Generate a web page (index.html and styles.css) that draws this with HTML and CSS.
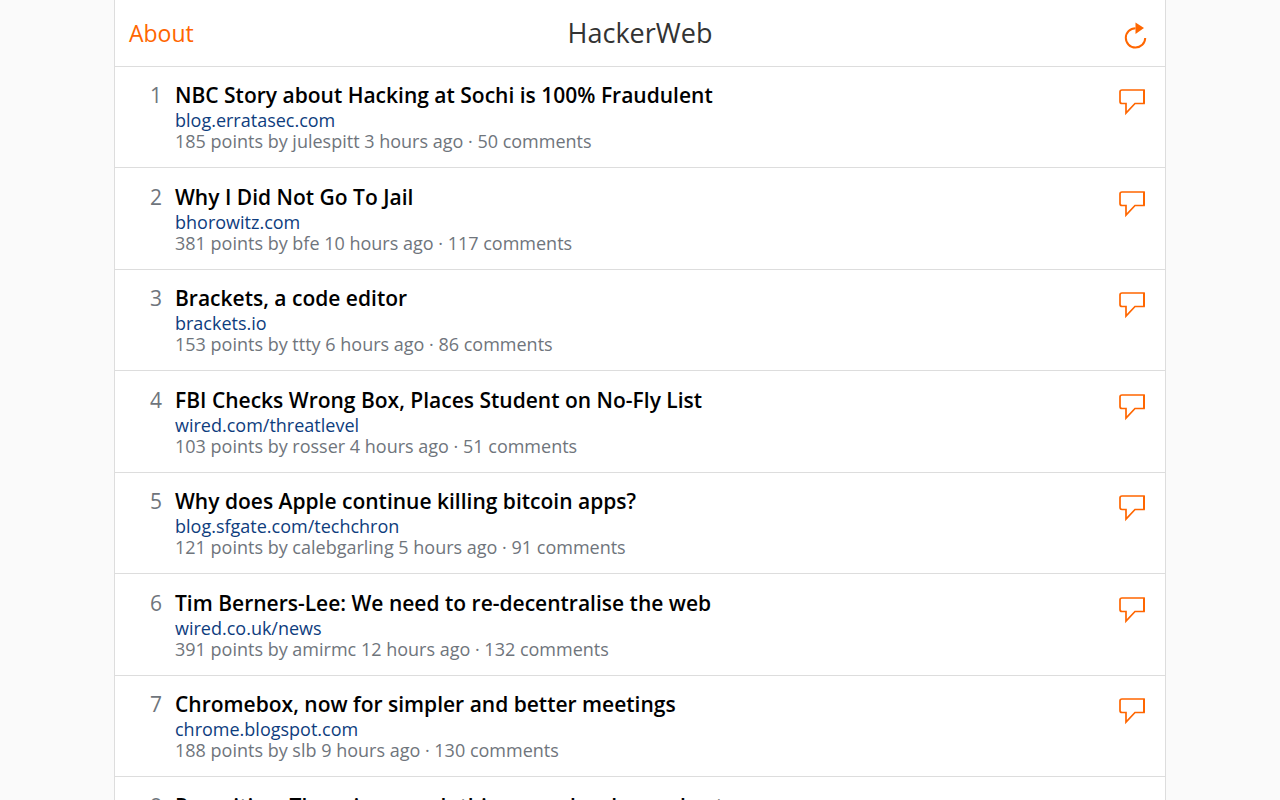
FILE: index.html
```html
<!DOCTYPE html>
<html lang="en">
<head>
<meta charset="utf-8">
<meta name="viewport" content="width=device-width, initial-scale=1">
<title>HackerWeb</title>
<link rel="stylesheet" href="styles.css">
</head>
<body>
<svg class="sprite" aria-hidden="true">
<symbol id="comment" viewBox="0 0 28 28"><path d="M4 2H26V15.500H17L8 25V15.500H4Q2 15.500 2 13.500V4Q2 2 4 2Z" fill="none" stroke="currentColor" stroke-width="1.700"/><path d="M26 2V15.500" stroke="currentColor" stroke-width="2"/></symbol>
</svg>
<div class="page">
<header class="bar">
<a class="about" href="#about">About</a>
<h1 class="brand">HackerWeb</h1>
<button class="refresh" type="button" aria-label="Refresh"><svg class="icon" viewBox="0 0 28 28"><path d="M12.500 7.200A9.700 9.700 0 1 0 22.200 17" fill="none" stroke="currentColor" stroke-width="2"/><path d="M12.500 1.500V13L21 7Z" fill="currentColor"/></svg></button>
</header>
<ol class="stories">
<li class="story"><span class="rank">1</span><div class="body"><a class="title" href="#1">NBC Story about Hacking at Sochi is 100% Fraudulent</a><span class="site">blog.erratasec.com</span><span class="meta">185 points by julespitt 3 hours ago · 50 comments</span></div><a class="comments" href="#c1" aria-label="Comments"><svg class="icon"><use href="#comment"/></svg></a></li>
<li class="story"><span class="rank">2</span><div class="body"><a class="title" href="#2">Why I Did Not Go To Jail</a><span class="site">bhorowitz.com</span><span class="meta">381 points by bfe 10 hours ago · 117 comments</span></div><a class="comments" href="#c2" aria-label="Comments"><svg class="icon"><use href="#comment"/></svg></a></li>
<li class="story"><span class="rank">3</span><div class="body"><a class="title" href="#3">Brackets, a code editor</a><span class="site">brackets.io</span><span class="meta">153 points by ttty 6 hours ago · 86 comments</span></div><a class="comments" href="#c3" aria-label="Comments"><svg class="icon"><use href="#comment"/></svg></a></li>
<li class="story"><span class="rank">4</span><div class="body"><a class="title" href="#4">FBI Checks Wrong Box, Places Student on No-Fly List</a><span class="site">wired.com/threatlevel</span><span class="meta">103 points by rosser 4 hours ago · 51 comments</span></div><a class="comments" href="#c4" aria-label="Comments"><svg class="icon"><use href="#comment"/></svg></a></li>
<li class="story"><span class="rank">5</span><div class="body"><a class="title" href="#5">Why does Apple continue killing bitcoin apps?</a><span class="site">blog.sfgate.com/techchron</span><span class="meta">121 points by calebgarling 5 hours ago · 91 comments</span></div><a class="comments" href="#c5" aria-label="Comments"><svg class="icon"><use href="#comment"/></svg></a></li>
<li class="story"><span class="rank">6</span><div class="body"><a class="title" href="#6">Tim Berners-Lee: We need to re-decentralise the web</a><span class="site">wired.co.uk/news</span><span class="meta">391 points by amirmc 12 hours ago · 132 comments</span></div><a class="comments" href="#c6" aria-label="Comments"><svg class="icon"><use href="#comment"/></svg></a></li>
<li class="story"><span class="rank">7</span><div class="body"><a class="title" href="#7">Chromebox, now for simpler and better meetings</a><span class="site">chrome.blogspot.com</span><span class="meta">188 points by slb 9 hours ago · 130 comments</span></div><a class="comments" href="#c7" aria-label="Comments"><svg class="icon"><use href="#comment"/></svg></a></li>
<li class="story"><span class="rank">8</span><div class="body"><a class="title" href="#8">Recruiting: There is no such thing as a developer shortage</a></div></li>
</ol>
</div>
</body>
</html>
```
FILE: styles.css
```css
* { box-sizing: border-box; }
body {
  margin: 0;
  height: 100vh;
  overflow: hidden;
  background: #fafafa;
  font-family: "Open Sans", sans-serif;
  color: #000;
}
a { text-decoration: none; }
.sprite { position: absolute; width: 0; height: 0; }
.page {
  max-width: 1052px;
  min-height: 100vh;
  margin: 0 auto;
  background: #fff;
  border: solid #ddd;
  border-width: 0 1px;
}
.bar {
  display: grid;
  grid-template-columns: 1fr auto 1fr;
  align-items: center;
  height: 67px;
  padding: 0 14px 1px;
  border-bottom: 1px solid #ddd;
}
.about { color: #ff6600; font-size: 23px; }
.brand { margin: 0; font-size: 27px; font-weight: 400; color: #333; }
.refresh {
  justify-self: end;
  padding: 5px 0 0;
  border: 0;
  background: none;
  color: #ff6600;
}
.icon { display: block; width: 28px; height: 28px; }
.stories { margin: 0; padding: 0; list-style: none; }
.story {
  display: flex;
  align-items: flex-start;
  height: 101px;
  padding: 15px 19px 0 14px;
  border-bottom: 1px solid #ddd;
}
.story:nth-child(even) { height: 102px; padding-top: 16px; }
.rank {
  width: 33px;
  margin-right: 13px;
  font-size: 21px;
  line-height: 27px;
  text-align: right;
  color: #6f757c;
}
.body { flex: 1; display: flex; flex-direction: column; }
.title { color: #000; font-size: 21px; font-weight: 600; line-height: 27px; }
.site { color: #0e3d7e; font-size: 18px; line-height: 22px; }
.meta { color: #6f757c; font-size: 18px; line-height: 20px; }
.comments { margin-top: 6px; color: #ff6600; }
```
